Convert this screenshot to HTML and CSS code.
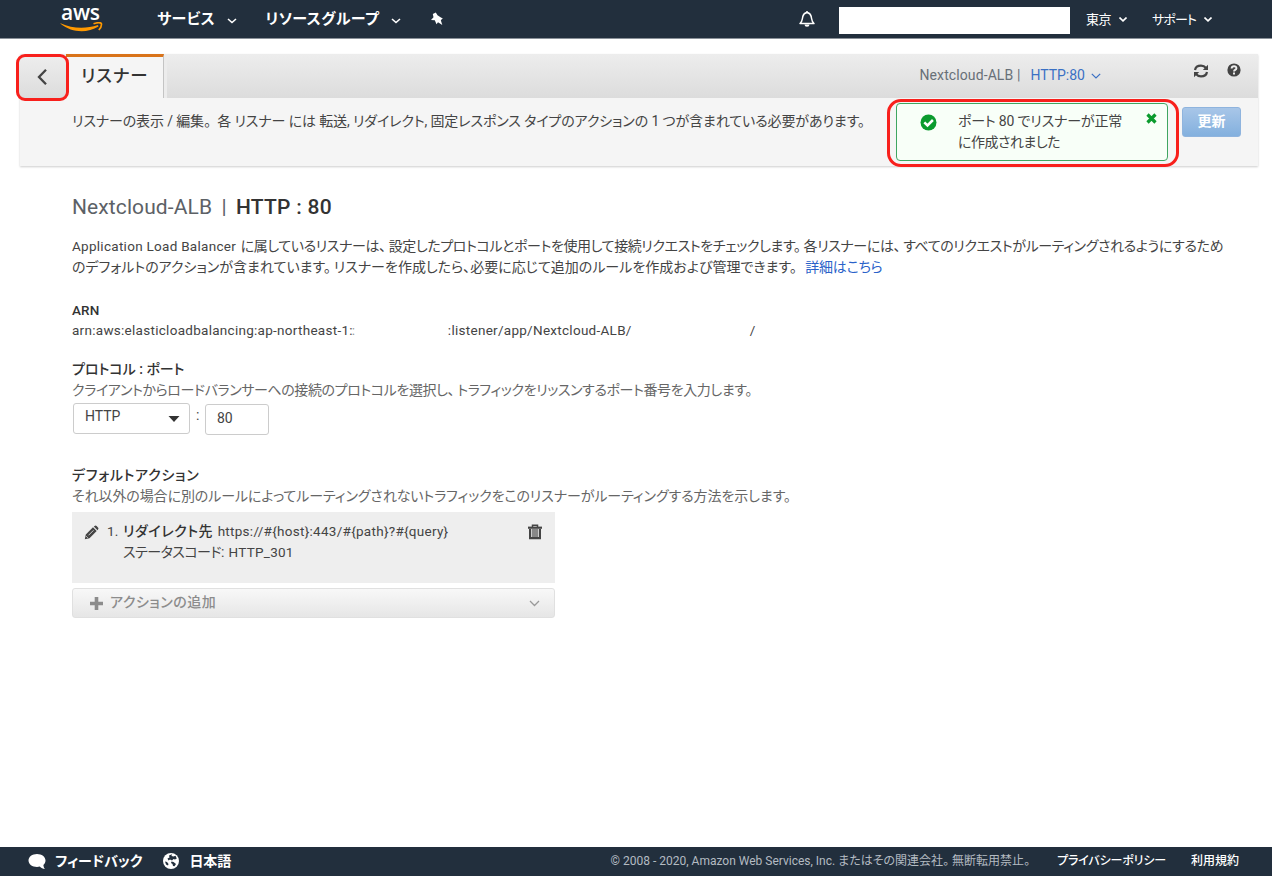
FILE: index.html
```
<!DOCTYPE html>
<html lang="ja">

<head>
    <meta charset="UTF-8">
    <meta name="viewport" content="width=device-width, initial-scale=1.0">
    <title>リスナー</title>
    <link rel="stylesheet" href="styles.css">
</head>

<body>

    <header class="navbar">
        <a class="logo">
            <span class="logo-text">aws</span>
            <svg class="logo-smile" width="44" height="11" viewBox="0 0 44 11">
                <path d="M.5 1.200C13 7 26 7 38 3L38.500 4.500C27 11.500 12 11 .5 1.800Z" fill="#f90"/>
                <path d="M33.500 1.800C37 .6 40.500 .6 41.300 1.500C41.800 3.500 40.800 6 38.800 8" fill="none" stroke="#f90" stroke-width="1.700"/>
            </svg>
        </a>
        <a class="nav-item nav-services">サービス
            <svg class="nav-caret" width="10" height="6" viewBox="0 0 10 6"><path d="M1 1L5 4.500L9 1" fill="none" stroke="#fff" stroke-width="1.600"/></svg>
        </a>
        <a class="nav-item nav-groups">リソースグループ
            <svg class="nav-caret" width="10" height="6" viewBox="0 0 10 6"><path d="M1 1L5 4.500L9 1" fill="none" stroke="#fff" stroke-width="1.600"/></svg>
        </a>
        <svg class="pin" width="14" height="14" viewBox="0 0 14 14"><path d="M5.800 .5L7.500 3.200L11.300 5.800L12.800 6.300L10.800 8.300L12.300 13L8 10.200L6.500 12.300L4.800 8.300L1 8L3.500 5.300L2.800 2Z" fill="#fff"/></svg>
        <div class="nav-right">
            <svg class="bell" width="18" height="18" viewBox="0 0 18 18"><path d="M2 13.500C4.500 11.500 4.300 9 4.800 6.500C5.300 4 6.500 3 9 2.500C11.500 3 12.700 4 13.200 6.500C13.700 9 13.500 11.500 16 13.500Z" fill="none" stroke="#fff" stroke-width="1.500" stroke-linejoin="round"/><path d="M9 1V3" stroke="#fff" stroke-width="1.500"/><path d="M6.500 14.500a2.500 2.300 0 0 0 5 0Z" fill="#fff"/></svg>
            <div class="account"></div>
            <a class="nav-small region">東京
                <svg width="8" height="5" viewBox="0 0 8 5"><path d="M.5 .5L4 3.800L7.500 .5" fill="none" stroke="#fff" stroke-width="1.600"/></svg>
            </a>
            <a class="nav-small support">サポート
                <svg width="8" height="5" viewBox="0 0 8 5"><path d="M.5 .5L4 3.800L7.500 .5" fill="none" stroke="#fff" stroke-width="1.600"/></svg>
            </a>
        </div>
    </header>

    <section class="top-panel">
        <div class="tab-bar">
            <button class="back">
                <svg width="12" height="18" viewBox="0 0 12 18"><path d="M10 1.800L3 9L10 16.200" fill="none" stroke="#444" stroke-width="2.300"/></svg>
            </button>
            <div class="tab">リスナー</div>
            <div class="tab-info">
                <span class="lb-name">Nextcloud-ALB |</span>
                <a class="lb-port">HTTP:80</a>
                <svg class="lb-caret" width="10" height="6" viewBox="0 0 10 6"><path d="M.8 .8L5 5L9.200 .8" fill="none" stroke="#3a70c4" stroke-width="1.200"/></svg>
                <svg class="refresh" width="16" height="14" viewBox="0 0 16 14"><path d="M2 6C2.500 3 5 1.700 8 1.700C10.200 1.700 11.800 2.500 13 4M14 8C13.500 11 11 12.300 8 12.300C5.800 12.300 4.200 11.500 3 10" fill="none" stroke="#444" stroke-width="2.200"/><path d="M15 .8V6H9.800ZM1 13.200V8H6.200Z" fill="#444"/></svg>
                <svg class="help" width="14" height="14" viewBox="0 0 14 14"><circle cx="7" cy="7" r="6.600" fill="#444"/><path d="M4.600 5.500C4.800 2.500 9.600 2.700 9.400 5.400C9.300 6.900 7 6.800 7 8.400" fill="none" stroke="#eee" stroke-width="1.900"/><rect x="6" y="9.500" width="2" height="2" fill="#eee"/></svg>
            </div>
        </div>
        <div class="panel-body">
            <p class="panel-text">リスナーの表示 / 編集<span class="stop">。</span> 各 リスナー には 転送, リダイレクト, 固定レスポンス タイプのアクションの 1 つが含まれている必要があります。</p>
            <div class="alert-mark">
                <div class="alert">
                    <svg class="alert-ok" width="17" height="17" viewBox="0 0 17 17"><circle cx="8.500" cy="8.500" r="8" fill="#0b9b2e"/><path d="M4.300 8.300L7.500 11.500L12.900 6" fill="none" stroke="#fff" stroke-width="2.500"/></svg>
                    <p>ポート 80 でリスナーが正常<br><span class="alert-end">に作成されました</span></p>
                    <svg class="alert-close" width="11" height="11" viewBox="0 0 11 11"><path d="M1.500 1.500L9.500 9.500M9.500 1.500L1.500 9.500" stroke="#0b9b2e" stroke-width="3.200"/></svg>
                </div>
            </div>
            <button class="update">更新</button>
        </div>
    </section>

    <main class="content">
        <h1>Nextcloud-ALB <i>|</i> <b>HTTP : 80</b></h1>

        <p class="intro"><span class="en">Application Load Balancer</span> <span class="tight">に属しているリスナーは<span class="stop">、</span>設定したプロトコルとポートを使用して接続リクエストをチェックします<span class="stop">。</span>各リスナーには<span class="stop">、</span>すべてのリクエストがルーティングされるようにするため</span><br>
            のデフォルトのアクションが含まれています<span class="stop">。</span>リスナーを作成したら、必要に応じて追加のルールを作成および管理できます。 <a class="more">詳細はこちら</a></p>

        <h2 class="en">ARN</h2>
        <p class="arn en"><span>arn:aws:elasticloadbalancing:ap-northeast-1:</span><span class="arn-account">:</span><span class="arn-listener">:listener/app/Nextcloud-ALB/</span><span class="arn-id">/</span></p>

        <h2 class="port-title">プロトコル : ポート</h2>
        <p class="hint tight">クライアントからロードバランサーへの接続のプロトコルを選択し<span class="stop">、</span>トラフィックをリッスンするポート番号を入力します。</p>
        <div class="port-row">
            <div class="select">HTTP
                <svg width="12" height="6" viewBox="0 0 12 6"><path d="M.5 0H11.500L6 6Z" fill="#333"/></svg>
            </div>
            <span class="colon">:</span>
            <input class="port" type="text" value="80">
        </div>

        <h2 class="action-title">デフォルトアクション</h2>
        <p class="hint hint-action">それ以外の場合に別のルールによってルーティングされないトラフィックをこのリスナーがルーティングする方法を示します。</p>
        <div class="action">
            <svg class="pencil" width="15" height="15" viewBox="0 0 15 15"><path d="M.8 14.200L1.800 9.500L9 2.300L12.700 6L5.500 13.200ZM9.800 1.500L11 .7Q11.800 .2 12.600 1L14 2.400Q14.800 3.200 14.300 4L13.500 5.200Z" fill="#444"/><path d="M2.200 11.200L3.800 12.800M4.500 10.300L9.500 5.300" stroke="#eee" stroke-width=".8"/></svg>
            <span class="num en">1.</span>
            <div class="action-text">
                <b>リダイレクト先</b> <span class="en">https://#{host}:443/#{path}?#{query}</span><br>
                <span class="status">ステータスコード:</span> <span class="en">HTTP_301</span>
            </div>
            <svg class="trash" width="14" height="16" viewBox="0 0 14 16"><path d="M4.500 3V1.300H9.500V3" fill="none" stroke="#444" stroke-width="1.500"/><path d="M0 2.600H14V4.800H0Z" fill="#444"/><path d="M2.100 5V14.200H11.900V5" fill="none" stroke="#444" stroke-width="2.200"/><path d="M5 5V13M7 5V13M9 5V13" stroke="#444" stroke-width="1.200"/></svg>
        </div>
        <button class="add">
            <svg width="13" height="13" viewBox="0 0 13 13"><path d="M6.500 0V13M0 6.500H13" stroke="#8c8c8c" stroke-width="3.600"/></svg>
            <span>アクションの追加</span>
            <svg class="add-caret" width="11" height="7" viewBox="0 0 11 7"><path d="M1 1L5.500 5.500L10 1" fill="none" stroke="#999" stroke-width="1.300"/></svg>
        </button>
    </main>

    <footer class="footer">
        <svg class="comment" width="18" height="17" viewBox="0 0 18 17"><path d="M9 1C4.300 1 .5 3.800 .5 7.500S4.300 14 9 14C10 14 11 13.900 11.800 13.600C13 15 15 16 17 16C16 15 15.500 13.500 15.400 12C16.700 10.800 17.500 9.200 17.500 7.500C17.500 3.800 13.700 1 9 1Z" fill="#fff"/></svg>
        <a class="feedback">フィードバック</a>
        <svg class="globe" width="16" height="16" viewBox="0 0 16 16"><circle cx="8" cy="8" r="8" fill="#fff"/><path d="M6 2.500L9 1.300L8.500 3L10.500 3.500L12.500 2.800L13.800 5.500L12 6.500L10.500 6L9 7.500L7 6.500L5.500 7.500L4.500 5.500L6.500 4.500ZM2 8.500L4 9L5.500 11L5 12.500L3 11.500ZM8.500 8.500L10.500 9L13 11L11.500 13.300L10 13L9.500 11L8 10Z" fill="#222f3d"/></svg>
        <a class="language">日本語</a>
        <span class="copyright">© 2008 - 2020, Amazon Web Services, Inc. またはその関連会社<span class="stop">。</span>無断転用禁止。</span>
        <a class="privacy">プライバシーポリシー</a>
        <a class="terms">利用規約</a>
    </footer>

</body>

</html>
```
FILE: styles.css
```
* {
    box-sizing: border-box;
}

body {
    margin: 0;
    height: 876px;
    display: flex;
    flex-direction: column;
    overflow: hidden;
    background-color: #fff;
    color: #444;
    font-family: Roboto, "Noto Sans CJK JP", sans-serif;
    font-size: 14px;
    line-height: 21px;
    font-feature-settings: "palt";
    white-space: nowrap;
}

h1, h2, p {
    margin: 0;
}

svg {
    display: block;
    flex: none;
}

button {
    font-family: inherit;
    font-feature-settings: inherit;
    border: none;
    padding: 0;
}

.en {
    font-size: 13.5px;
    letter-spacing: 0.28px;
}

.tight {
    letter-spacing: -0.39px;
}

.stop {
    margin-right: 3px;
}

/* top navigation */
.navbar {
    flex: none;
    display: flex;
    align-items: center;
    height: 39px;
    padding-left: 60px;
    background-color: #222f3d;
    border-bottom: 1px solid #8a9199;
    color: #fff;
}

.logo {
    width: 97px;
    height: 38px;
}

.logo-text {
    display: block;
    height: 22px;
    padding-left: 1px;
    font: 600 21px/24px "Open Sans", sans-serif;
    letter-spacing: -0.3px;
}

.nav-item {
    display: flex;
    align-items: center;
    font-size: 15px;
    font-weight: bold;
    letter-spacing: 0.4px;
}

.nav-caret {
    margin: 3px 0 0 12px;
}

.nav-groups {
    margin-left: 28px;
}

.pin {
    margin-left: 29px;
}

.nav-right {
    display: flex;
    align-items: center;
    margin-left: auto;
    padding-right: 60px;
}

.account {
    width: 231px;
    height: 27px;
    margin: 2px 16px 0 23px;
    background-color: #fff;
}

.nav-small {
    display: flex;
    align-items: center;
    gap: 8px;
    font-size: 13px;
    letter-spacing: -0.5px;
}

.support {
    margin-left: 25px;
    letter-spacing: -0.9px;
}

/* tab bar and description */
.top-panel {
    flex: none;
    width: 1238px;
    height: 112px;
    margin: 15px 0 0 20px;
    background-color: #f5f5f5;
    box-shadow: 0 1px 2px rgba(0, 0, 0, 0.2);
}

.tab-bar {
    display: flex;
    height: 44px;
    background: linear-gradient(#ededed, #dcdcdc);
}

.back {
    width: 53px;
    height: 47px;
    margin-left: -4px;
    padding: 0 0 2px 17px;
    background: linear-gradient(#ededed, #dcdcdc);
    border: 3px solid #f8201c;
    border-radius: 9px;
    z-index: 1;
}

.tab {
    width: 98px;
    margin-left: -3px;
    padding: 9px 0 0 15px;
    background-color: #f5f5f5;
    border-top: 3px solid #d9731a;
    border-right: 1px solid #c4c4c4;
    box-shadow: 3px 0 0 #ececec;
    color: #333;
    font-size: 17.5px;
    line-height: 20px;
    font-weight: 500;
    letter-spacing: 0.9px;
}

.tab-info {
    display: flex;
    align-items: center;
    margin-left: auto;
    padding: 0 17px 2px 0;
}

.lb-name {
    color: #687078;
    letter-spacing: 0.1px;
}

.lb-port {
    margin-left: 10px;
    color: #3a70c4;
}

.lb-caret {
    margin: 2px 92px 0 6px;
}

.refresh {
    margin: -8px 18px 0 0;
}

.help {
    margin-top: -10px;
}

.panel-body {
    display: flex;
    align-items: flex-start;
    height: 68px;
    padding-left: 52px;
}

.panel-text {
    width: 815px;
    padding-top: 13px;
    letter-spacing: -0.12px;
}

.alert-mark {
    width: 292px;
    height: 68px;
    margin-top: 1px;
    padding: 1px 8px 2px 6px;
    border: 3px solid #f8201c;
    border-radius: 14px;
}

.alert {
    display: flex;
    height: 58px;
    padding: 7px 10px 0 23px;
    background-color: #f8fff8;
    border: 1px solid #3fa661;
    border-radius: 4px;
    letter-spacing: -0.17px;
}

.alert-ok {
    margin: 3px 21px 0 0;
}

.alert-end {
    letter-spacing: -0.5px;
}

.alert-close {
    margin: 2px 0 0 auto;
}

.update {
    width: 59px;
    height: 30px;
    margin: 9px 0 0 3px;
    padding-bottom: 4px;
    background: linear-gradient(#a8c6e8, #83b0de);
    border: 1px solid #8fb4de;
    border-radius: 3px;
    color: #fff;
    font-size: 14px;
    font-weight: bold;
}

/* listener details */
.content {
    flex: 1;
    padding: 29px 0 0 72px;
}

h1 {
    font-size: 21px;
    line-height: 24px;
    font-weight: normal;
    letter-spacing: 0.1px;
    color: #5c6166;
}

h1 i {
    margin: 0 4px;
    font-style: normal;
}

h1 b {
    color: #333;
    font-weight: 500;
    letter-spacing: 0.25px;
}

h2 {
    font-size: 14px;
    line-height: 20px;
    font-weight: 500;
    color: #333;
}

.intro {
    margin-top: 17px;
}

.intro .en {
    margin-right: 1px;
}

.more {
    margin-left: 5px;
    color: #2a62c9;
    letter-spacing: -0.2px;
}

h2.en {
    margin-top: 22px;
    letter-spacing: 0.1px;
}

.arn {
    display: flex;
}

.arn-account {
    width: 3px;
    margin-left: -1px;
    color: #999;
}

.arn-listener {
    margin-left: 93px;
}

.arn-id {
    margin-left: 118px;
}

.port-title {
    margin-top: 18px;
}

.hint {
    padding-top: 1px;
    color: #666;
}

.port-row {
    display: flex;
    margin: 2px 0 0 1px;
}

.select {
    display: flex;
    justify-content: space-between;
    align-items: center;
    width: 117px;
    height: 31px;
    padding: 0 9px 4px 11px;
    border: 1px solid #ccc;
    border-radius: 3px;
}

.select svg {
    margin-top: 5px;
}

.colon {
    width: 15px;
    padding: 2px 0 0 6px;
}

.port {
    width: 64px;
    height: 31px;
    margin-top: 1px;
    padding: 0 11px 3px;
    border: 1px solid #ccc;
    border-radius: 3px;
    color: #444;
    font-family: inherit;
    font-size: 14px;
}

.action-title {
    margin-top: 30px;
    letter-spacing: 0.7px;
}

.hint-action {
    letter-spacing: -0.09px;
}

.action {
    display: flex;
    width: 483px;
    height: 71px;
    margin-top: 5px;
    padding: 9px 13px 0 12px;
    background-color: #eee;
}

.pencil {
    margin: 4px 8px 0 0;
}

.num {
    width: 16px;
}

.action-text {
    flex: 1;
}

.action-text b {
    margin-right: 1px;
    color: #333;
    font-weight: 500;
    letter-spacing: 0.55px;
}

.status {
    margin-right: 1px;
    letter-spacing: -0.5px;
}

.trash {
    margin-top: 3px;
}

.add {
    display: flex;
    align-items: center;
    width: 483px;
    height: 30px;
    margin-top: 5px;
    padding: 0 14px 0 17px;
    background: linear-gradient(#f8f8f8, #e6e6e6);
    border: 1px solid #e0e0e0;
    border-radius: 3px;
    color: #8c8c8c;
    font-size: 14px;
    font-weight: 500;
}

.add span {
    margin-left: 7px;
    padding-bottom: 4px;
    letter-spacing: 0.5px;
}

.add-caret {
    margin-left: auto;
}

/* footer */
.footer {
    flex: none;
    display: flex;
    align-items: center;
    height: 29px;
    padding: 0 33px 1px 28px;
    background-color: #222f3d;
    color: #fff;
}

.feedback, .language {
    font-weight: bold;
}

.feedback {
    margin: 0 21px 0 9px;
}

.language {
    margin-left: 10px;
}

.copyright {
    margin-left: auto;
    color: #b4bbc2;
    font-size: 12px;
}

.privacy, .terms {
    font-size: 12px;
    font-weight: 500;
}

.privacy {
    margin: 0 25px 0 27px;
    letter-spacing: -0.15px;
}
```
